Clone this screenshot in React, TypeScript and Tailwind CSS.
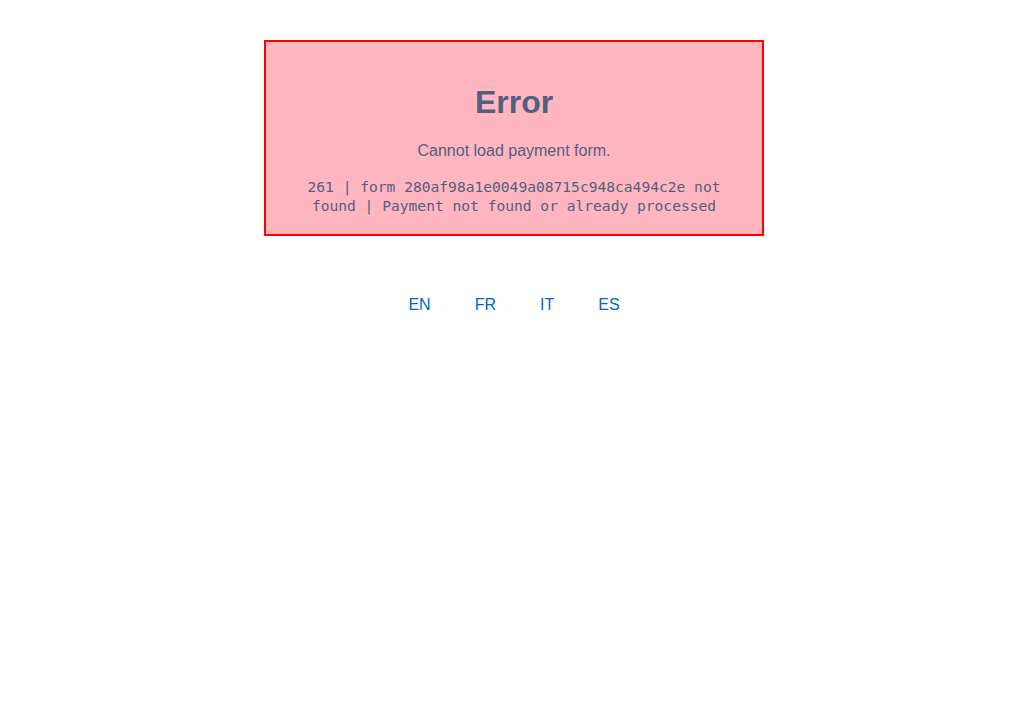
export default function App() {
  const langs = ["EN", "FR", "IT", "ES"];

  return (
    <div className="min-h-screen bg-white pt-10 font-['Liberation_Sans',Arial,sans-serif] text-[#525f7f]">
      <div className="mx-auto w-[500px] border-2 border-[#ff0000] bg-[#ffb6c1] px-5 pb-[19px] pt-[42px] text-center">
        <h1 className="text-[32px] font-bold leading-[36px]">Error</h1>
        <p className="mt-[21px] text-[16px] leading-[20px]">Cannot load payment form.</p>
        <p className="mt-[16px] font-['DejaVu_Sans_Mono',monospace] text-[14.6px] leading-[19px]">
          261 | form 280af98a1e0049a08715c948ca494c2e not found | Payment not found or already processed
        </p>
      </div>

      <div className="mt-[59px] flex justify-center gap-[44px]">
        {langs.map((lang) => (
          <a key={lang} href="#" className="text-[16px] leading-[20px] text-[#0066cc]">
            {lang}
          </a>
        ))}
      </div>
    </div>
  );
}
